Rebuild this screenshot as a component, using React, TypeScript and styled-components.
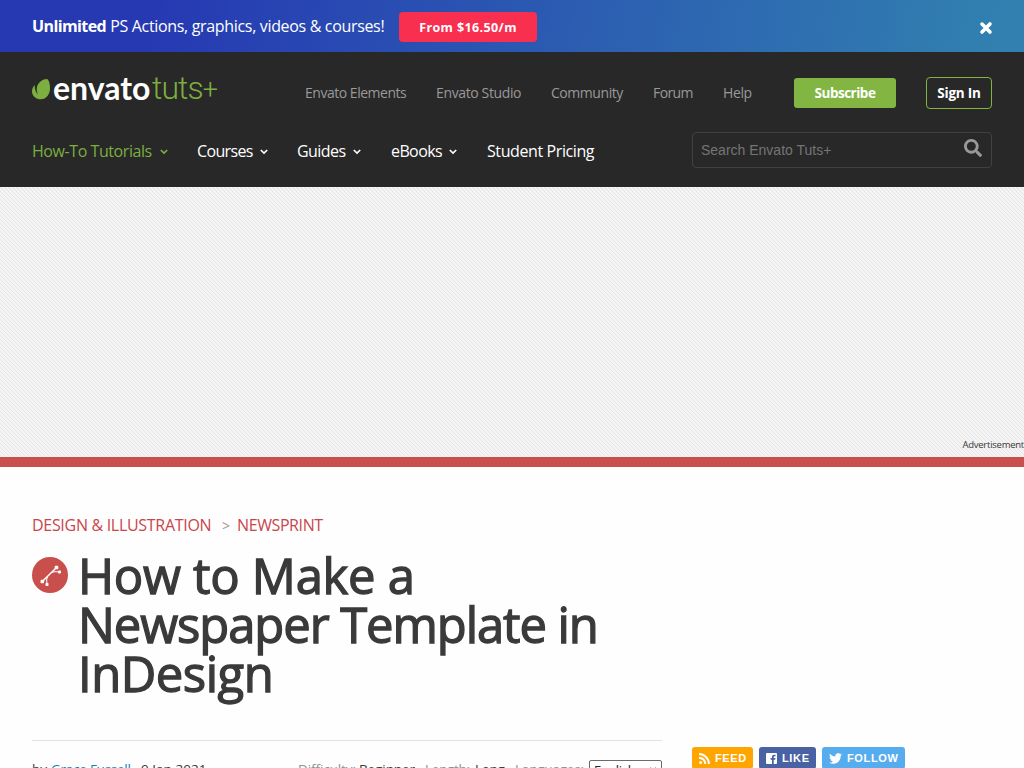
import React from "react";
import styled, { createGlobalStyle } from "styled-components";
import { FaSearch } from "react-icons/fa";
import { FaXmark } from "react-icons/fa6";

const Global = createGlobalStyle`
  * { box-sizing: border-box; }
  html, body { margin: 0; padding: 0; overflow: hidden; background: #fefefe; }
  body { font-family: "Open Sans", "Noto Sans", sans-serif; font-size: 16px; color: #3a3a3a; }
  a { color: inherit; text-decoration: none; }
`;

const Page = styled.div`
  width: 1024px;
  height: 768px;
  overflow: hidden;
  background: #fefefe;
`;

const Text = styled.span<{ $ls?: number }>`
  white-space: nowrap;
  letter-spacing: ${(p) => p.$ls ?? 0}px;
`;

const Banner = styled.div`
  display: flex;
  align-items: center;
  height: 52px;
  padding: 0 32px;
  color: #fff;
  background: linear-gradient(100deg, #2639b3 15%, #3180b0 97%);
`;

const BannerCopy = styled.div`
  flex: 0 0 367px;
  line-height: 24px;
  white-space: nowrap;
`;

const Offer = styled.a`
  width: 138px;
  height: 30px;
  margin-top: 2px;
  line-height: 31px;
  border-radius: 4px;
  background: #f92f50;
  font-size: 12.5px;
  font-weight: 700;
  text-align: center;
`;

const Close = styled.button`
  display: flex;
  margin: 4px -2px 0 auto;
  padding: 0;
  border: 0;
  color: #fff;
  background: none;
`;

const Header = styled.header`
  height: 135px;
  padding: 25px 32px 0;
  background: #282828;
`;

const HeaderRow = styled.div<{ $h: number; $mt?: number }>`
  display: flex;
  align-items: center;
  height: ${(p) => p.$h}px;
  margin-top: ${(p) => p.$mt ?? 0}px;
`;

const Logo = styled.a`
  display: flex;
  flex: 0 0 273px;
  align-items: flex-start;
  height: 32px;
`;

const Leaf = styled.svg`
  flex: none;
  margin: 2px 2px 0 0;
`;

const Envato = styled.span`
  flex: 0 0 99px;
  margin-top: -7px;
  font: 700 32px/36px Lato, sans-serif;
  color: #fff;
`;

const Tuts = styled.span`
  margin-top: -7px;
  font: 300 32px/36px Roboto, sans-serif;
  color: #7cae40;
  white-space: nowrap;
`;

const Plus = styled.span`
  font-size: 27px;
`;

const SmallLink = styled.a<{ $w: number }>`
  flex: 0 0 ${(p) => p.$w}px;
  font-size: 14px;
  line-height: 20px;
  color: #999;
`;

const Subscribe = styled.a`
  width: 102px;
  height: 30px;
  margin-right: 30px;
  border-radius: 3px;
  background: #82b541;
  color: #fff;
  font-size: 13.5px;
  font-weight: 700;
  line-height: 30px;
  text-align: center;
`;

const SignIn = styled(Subscribe)`
  width: 66px;
  height: 32px;
  margin-right: 0;
  border: 1px solid #82b541;
  border-radius: 4px;
  background: none;
`;

const MainLink = styled.a<{ $w: number; $active?: boolean }>`
  display: flex;
  align-items: center;
  flex: 0 0 ${(p) => p.$w}px;
  padding-top: 2px;
  line-height: 24px;
  color: ${(p) => (p.$active ? "#7cae40" : "#fff")};
  svg { margin-top: 2px; }
`;

const LinkLabel = styled.span<{ $w: number; $ls: number }>`
  flex: 0 0 ${(p) => p.$w}px;
  letter-spacing: ${(p) => p.$ls}px;
  white-space: nowrap;
`;

const Search = styled.div`
  display: flex;
  align-items: center;
  justify-content: space-between;
  width: 300px;
  height: 36px;
  margin-left: auto;
  padding: 0 9px 0 8px;
  border: 1px solid #414141;
  border-radius: 4px;
  color: #757575;
  font: 14px "Liberation Sans", Arial, sans-serif;
  svg { margin-bottom: 4px; color: #999; }
`;

const STRIPE = "conic-gradient(from 270deg at 1px 1px, #e4e4e4 90deg, transparent 0)";

const Advert = styled.div`
  display: flex;
  align-items: flex-end;
  justify-content: flex-end;
  height: 270px;
  padding-bottom: 6px;
  background-color: #f5f5f5;
  background-image: ${STRIPE}, ${STRIPE}, ${STRIPE}, ${STRIPE};
  background-size: 4px 4px;
  background-position: 0 0, 1px 1px, 2px 2px, 3px 3px;
  font-size: 9.5px;
  line-height: 13px;
`;

const Rule = styled.div`
  height: 10px;
  background: #c94f4c;
`;

const Article = styled.main`
  padding: 46px 32px 0;
`;

const Crumbs = styled.nav`
  display: flex;
  height: 24px;
  line-height: 24px;
  color: #c9454a;
`;

const Crumb = styled.a<{ $w: number; $ls: number }>`
  flex: 0 0 ${(p) => p.$w}px;
  letter-spacing: ${(p) => p.$ls}px;
  white-space: nowrap;
`;

const CrumbArrow = styled.span`
  flex: 0 0 15px;
  color: #999;
  font-size: 14px;
  line-height: 26px;
`;

const TitleRow = styled.div`
  display: flex;
  align-items: flex-start;
  gap: 10px;
  margin-top: 14px;
`;

const CategoryIcon = styled.svg`
  flex: none;
  margin-top: 6px;
`;

const Title = styled.h1`
  margin: 0;
  font-size: 49px;
  font-weight: 400;
  line-height: 49px;
  color: #3a3a3a;
  -webkit-text-stroke: 1.3px #3a3a3a;
`;

const TitleLine = styled.span<{ $ls: number }>`
  display: block;
  white-space: nowrap;
  letter-spacing: ${(p) => p.$ls}px;
`;

const Columns = styled.div`
  display: flex;
  gap: 30px;
  margin-top: 42px;
`;

const Meta = styled.div`
  display: flex;
  flex: 0 0 630px;
  height: 60px;
  padding-top: 18px;
  border-top: 1px solid #e2e2e2;
  font-size: 13.5px;
  line-height: 20px;
`;

const MetaItem = styled.span<{ $w: number; $ls?: number; $tone?: "link" | "muted" }>`
  flex: 0 0 ${(p) => p.$w}px;
  white-space: nowrap;
  letter-spacing: ${(p) => p.$ls ?? 0}px;
  color: ${(p) => (p.$tone === "link" ? "#0a84b5" : p.$tone === "muted" ? "#8a9296" : "#3a3a3a")};
`;

const Language = styled.div`
  display: flex;
  align-items: center;
  justify-content: space-between;
  width: 73px;
  height: 19px;
  margin-top: 1px;
  padding: 0 4px;
  border: 1px solid #6b6b6b;
  border-radius: 2px;
  color: #222;
  background: #fff;
  font-size: 13px;
`;

const Shares = styled.div`
  display: flex;
  gap: 6px;
  padding-top: 7px;
`;

const Share = styled.a<{ $w: number; $bg: string }>`
  display: flex;
  align-items: center;
  gap: 5px;
  width: ${(p) => p.$w}px;
  height: 22px;
  padding-left: 7px;
  border-radius: 3px;
  background: ${(p) => p.$bg};
  color: #fff;
  font: 700 11px "Liberation Sans", Arial, sans-serif;
  letter-spacing: 0.65px;
  svg { flex: none; }
`;

const Chevron = () => (
  <svg width="8" height="6" viewBox="0 0 8 6" fill="none" stroke="currentColor" strokeWidth="1.7">
    <path d="M0.8 1 L4 4 L7.2 1" />
  </svg>
);

const topLinks = [
  { label: "Envato Elements", w: 131, ls: -0.48 },
  { label: "Envato Studio", w: 115, ls: -0.37 },
  { label: "Community", w: 102, ls: -0.45 },
  { label: "Forum", w: 70, ls: -0.6 },
  { label: "Help", w: 71, ls: -0.4 },
];

const mainLinks = [
  { label: "How-To Tutorials", w: 165, text: 128, ls: -0.43, menu: true, active: true },
  { label: "Courses", w: 100, text: 63, ls: -0.65, menu: true },
  { label: "Guides", w: 94, text: 56, ls: -0.55, menu: true },
  { label: "eBooks", w: 96, text: 58, ls: -0.6, menu: true },
  { label: "Student Pricing", w: 107, text: 107, ls: -0.4 },
];

export default function App() {
  return (
    <Page>
      <Global />
      <Banner>
        <BannerCopy>
          <Text $ls={-0.6}><b>Unlimited</b></Text>{" "}
          <Text $ls={-0.33}>PS Actions, graphics, videos &amp; courses!</Text>
        </BannerCopy>
        <Offer><Text $ls={0.4}>From $16.50/m</Text></Offer>
        <Close aria-label="Close"><FaXmark size={16} stroke="currentColor" strokeWidth={50} /></Close>
      </Banner>

      <Header>
        <HeaderRow $h={32}>
          <Logo>
            <Leaf width="19" height="21" viewBox="0 0 19 21" fill="#7cae40">
              <path d="M15 0 C10.500 0 6.500 3.500 5.200 7 C4.300 10 4.800 13 6 15.500 C3.800 13.500 2.600 10 2.700 6 C0.900 7.800 0 10 0 12.500 C0 17 4 20.300 8.800 20.300 C14.500 20.300 18 15 18 9.500 C18 5 17 1 15 0 Z" />
            </Leaf>
            <Envato><Text>envato</Text></Envato>
            <Tuts><Text $ls={-0.9}>tuts<Plus>+</Plus></Text></Tuts>
          </Logo>
          {topLinks.map((l) => (
            <SmallLink key={l.label} $w={l.w}><Text $ls={l.ls}>{l.label}</Text></SmallLink>
          ))}
          <Subscribe><Text $ls={-0.5}>Subscribe</Text></Subscribe>
          <SignIn><Text $ls={-0.2}>Sign In</Text></SignIn>
        </HeaderRow>
        <HeaderRow $h={36} $mt={23}>
          {mainLinks.map((l) => (
            <MainLink key={l.label} $w={l.w} $active={l.active}>
              <LinkLabel $w={l.text} $ls={l.ls}>{l.label}</LinkLabel>
              {l.menu && <Chevron />}
            </MainLink>
          ))}
          <Search>
            <Text>Search Envato Tuts+</Text>
            <FaSearch size={18} />
          </Search>
        </HeaderRow>
      </Header>

      <Advert><Text $ls={-0.25}>Advertisement</Text></Advert>
      <Rule />

      <Article>
        <Crumbs>
          <Crumb $w={190} $ls={-0.3}>DESIGN &amp; ILLUSTRATION</Crumb>
          <CrumbArrow>&gt;</CrumbArrow>
          <Crumb $w={100} $ls={-0.4}>NEWSPRINT</Crumb>
        </Crumbs>
        <TitleRow>
          <CategoryIcon width="36" height="36" viewBox="0 0 36 36">
            <circle cx="18" cy="18" r="18" fill="#c94f4c" />
            <g stroke="#fff" fill="none">
              <path d="M10.300 24.500 L24.500 10.500" strokeWidth="1.5" />
              <path d="M15 27.500 Q14 22.500 15.500 19.500 M27.500 15 Q22.500 14 19.500 15.500" strokeWidth="1" />
            </g>
            <g fill="#fff">
              <rect x="8.500" y="22.700" width="3.600" height="3.600" rx="1" />
              <rect x="22.700" y="8.700" width="3.600" height="3.600" rx="1" />
              <rect x="13.500" y="26" width="3" height="3" rx="0.800" />
              <rect x="26" y="13.600" width="3" height="3" rx="0.800" />
            </g>
          </CategoryIcon>
          <Title>
            <TitleLine $ls={-0.3}>How to Make a</TitleLine>
            <TitleLine $ls={-1.1}>Newspaper Template in</TitleLine>
            <TitleLine $ls={-0.5}>InDesign</TitleLine>
          </Title>
        </TitleRow>
        <Columns>
          <Meta>
            <MetaItem $w={19}>by</MetaItem>
            <MetaItem $w={90} $tone="link" $ls={-0.25}>Grace Fussell</MetaItem>
            <MetaItem $w={157} $ls={0.05}>9 Jan 2021</MetaItem>
            <MetaItem $w={61} $tone="muted" $ls={-0.1}>Difficulty:</MetaItem>
            <MetaItem $w={66} $ls={-0.1}>Beginner</MetaItem>
            <MetaItem $w={50} $tone="muted" $ls={-0.3}>Length:</MetaItem>
            <MetaItem $w={40} $ls={-0.3}>Long</MetaItem>
            <MetaItem $w={74} $tone="muted" $ls={-0.2}>Languages:</MetaItem>
            <Language><Text $ls={-0.2}>English</Text><Chevron /></Language>
          </Meta>
          <Shares>
            <Share $w={61} $bg="#ffa500">
              <svg width="11" height="11" viewBox="0 0 11 11" fill="none" stroke="#fff" strokeWidth="2">
                <circle cx="1.600" cy="9.400" r="1.500" fill="#fff" stroke="none" />
                <path d="M0 4.700 A6.300 6.300 0 0 1 6.300 11 M0 1.100 A9.900 9.900 0 0 1 9.900 11" />
              </svg>
              FEED
            </Share>
            <Share $w={57} $bg="#4862a3">
              <svg width="11" height="11" viewBox="0 0 11 11">
                <rect width="11" height="11" rx="1" fill="#fff" />
                <path d="M6 11V6.700H4.600V5.100H6V4C6 2.500 6.800 1.700 8.200 1.700H9.500V3.300H8.500C7.900 3.300 7.700 3.600 7.700 4.100V5.100H9.400L9.200 6.700H7.700V11Z" fill="#4862a3" />
              </svg>
              LIKE
            </Share>
            <Share $w={83} $bg="#55acee">
              <svg width="13" height="11" viewBox="0 0 24 20" fill="#fff">
                <path d="M24 2.400c-.9.400-1.800.7-2.800.8 1-.6 1.800-1.600 2.200-2.700-1 .6-2 1-3.100 1.200A4.900 4.900 0 0 0 11.900 6.200C7.800 6 4.100 4 1.700 1c-1.300 2.200-.7 5.100 1.500 6.600-.8 0-1.600-.2-2.200-.6-.1 2.300 1.600 4.400 3.900 4.900-.7.200-1.500.2-2.200.1.600 2 2.400 3.400 4.600 3.400A9.900 9.900 0 0 1 0 17.500 14 14 0 0 0 7.500 19.700c9.100 0 14.300-7.700 14-14.600 1-.7 1.800-1.600 2.500-2.700Z" />
              </svg>
              FOLLOW
            </Share>
          </Shares>
        </Columns>
      </Article>
    </Page>
  );
}
